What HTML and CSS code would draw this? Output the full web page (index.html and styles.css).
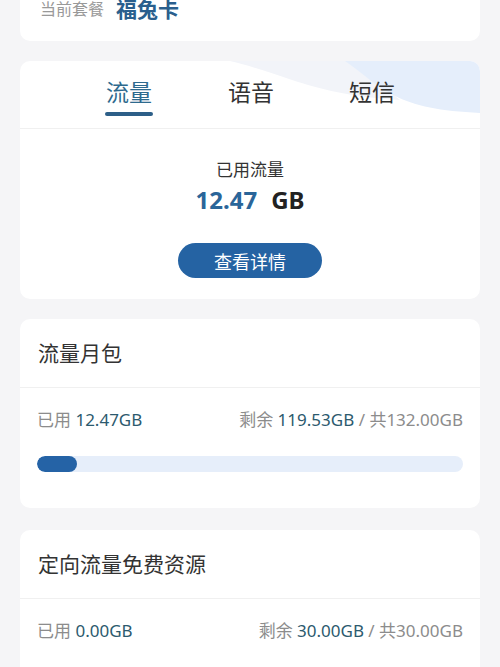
FILE: index.html
```html
<!DOCTYPE html>
<html lang="zh">
<head>
    <meta charset="UTF-8">
    <meta name="viewport" content="width=device-width, initial-scale=1.0">
    <title>套餐余量</title>
    <link rel="stylesheet" href="styles.css">
</head>
<body>
    <div class="page">
        <div class="card plan-card">
            <span class="plan-label">当前套餐</span>
            <span class="plan-name">福兔卡</span>
        </div>

        <div class="card usage-card">
            <svg class="usage-deco" width="460" height="70" viewBox="0 0 460 70">
                <path d="M210 0 H330 L380 39 C330 36 300 28 272 19 C248 11 228 4 210 0 Z" fill="#f2f4f9"/>
                <path d="M325 0 H460 V52 C420 50 395 45 375 35 C355 25 340 10 325 0 Z" fill="#e5eefb"/>
            </svg>
            <div class="tabs">
                <div class="tab active">流量<span class="tab-line"></span></div>
                <div class="tab">语音</div>
                <div class="tab">短信</div>
            </div>
            <div class="usage-body">
                <div class="usage-title">已用流量</div>
                <div class="usage-amount"><span class="num">12.47</span><span class="unit">GB</span></div>
                <button class="detail-btn">查看详情</button>
            </div>
        </div>

        <div class="card pack-card">
            <div class="pack-title">流量月包</div>
            <div class="pack-body">
                <div class="pack-row">
                    <span>已用 <b>12.47GB</b></span>
                    <span>剩余 <b>119.53GB</b> / 共132.00GB</span>
                </div>
                <div class="bar"><div class="bar-fill" style="width: 9.4%"></div></div>
            </div>
        </div>

        <div class="card pack-card">
            <div class="pack-title">定向流量免费资源</div>
            <div class="pack-body">
                <div class="pack-row">
                    <span>已用 <b>0.00GB</b></span>
                    <span>剩余 <b>30.00GB</b> / 共30.00GB</span>
                </div>
                <div class="bar"><div class="bar-fill" style="width: 0%"></div></div>
            </div>
        </div>
    </div>
</body>
</html>
```

FILE: styles.css
```css
* {
    margin: 0;
    padding: 0;
    box-sizing: border-box;
}

body {
    font-family: "Noto Sans", "Noto Sans CJK SC", sans-serif;
    background-color: #f5f5f7;
    color: #333;
}

.page {
    margin-top: -20px;
    padding: 0 20px 40px;
    display: flex;
    flex-direction: column;
    gap: 20px;
}

.card {
    background-color: white;
    border-radius: 10px;
    overflow: hidden;
}

/* 当前套餐 */
.plan-card {
    padding: 17px 20px 23px;
    display: flex;
    align-items: center;
    gap: 12px;
    height: 61px;
}

.plan-label {
    font-size: 16px;
    color: #999;
}

.plan-name {
    font-size: 21px;
    font-weight: bold;
    color: #2a5f8d;
}

/* 流量 / 语音 / 短信 */
.usage-card {
    position: relative;
}

.usage-deco {
    position: absolute;
    top: 0;
    right: 0;
}

.tabs {
    position: relative;
    display: flex;
    justify-content: center;
    gap: 75px;
    padding-top: 18px;
    height: 68px;
    border-bottom: 1px solid #f0f0f0;
}

.tab {
    display: flex;
    flex-direction: column;
    align-items: center;
    font-size: 23px;
    line-height: 26px;
    color: #333;
}

.tab.active {
    color: #2e6a8e;
}

.tab-line {
    margin-top: 7px;
    width: 48px;
    height: 4px;
    border-radius: 2px;
    background-color: #2d5f88;
}

.usage-body {
    display: flex;
    flex-direction: column;
    align-items: center;
    padding: 30px 0 21px;
}

.usage-title {
    font-size: 17px;
    line-height: 22px;
}

.usage-amount {
    margin-top: 3px;
    font-size: 24px;
    line-height: 32px;
    font-weight: bold;
    display: flex;
    gap: 14px;
}

.usage-amount .num {
    color: #2a6599;
}

.usage-amount .unit {
    color: #222;
}

.detail-btn {
    margin-top: 27px;
    width: 144px;
    height: 35px;
    border: none;
    border-radius: 18px;
    background-color: #2563a3;
    color: white;
    font-family: inherit;
    font-size: 18px;
    cursor: pointer;
}

/* 月包 */
.pack-title {
    padding: 20px 18px;
    font-size: 21px;
    line-height: 28px;
    color: #333;
    border-bottom: 1px solid #f0f0f0;
}

.pack-body {
    padding: 21px 17px 36px 17px;
}

.pack-row {
    display: flex;
    justify-content: space-between;
    font-size: 17px;
    line-height: 22px;
    color: #8c8c8c;
}

.pack-row b {
    font-weight: normal;
    color: #2c5a6e;
}

.bar {
    margin-top: 25px;
    height: 16px;
    border-radius: 8px;
    background-color: #e6eefa;
    overflow: hidden;
}

.bar-fill {
    height: 100%;
    min-width: 40px;
    border-radius: 8px;
    background-color: #2563a6;
}

.pack-card:last-child {
    margin-top: 2px;
}

.pack-card:last-child .bar-fill {
    min-width: 0;
}
```
